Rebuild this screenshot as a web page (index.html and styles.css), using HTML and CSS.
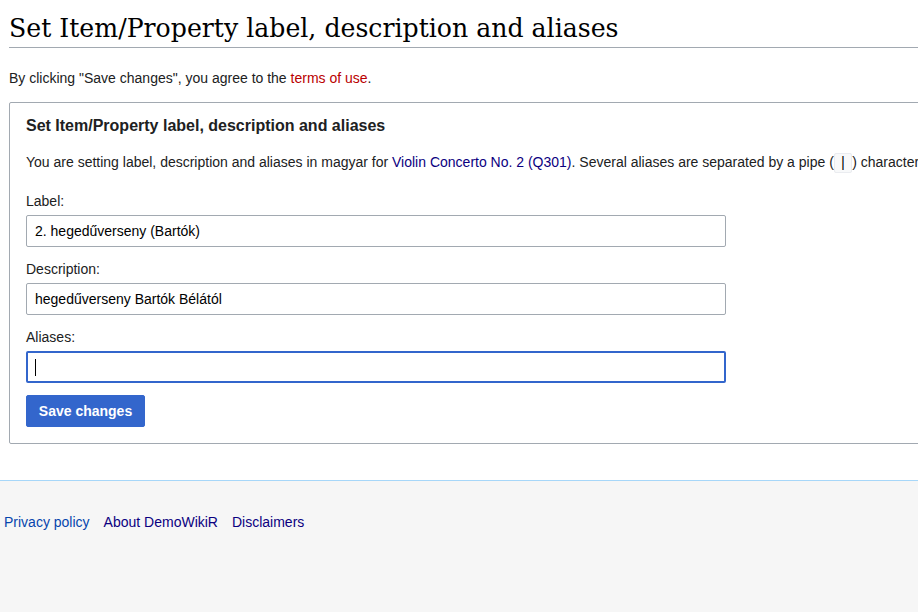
FILE: index.html
```html
<!DOCTYPE html>
<html lang="en">
<head>
<meta charset="utf-8">
<title>Set Item/Property label, description and aliases</title>
<link rel="stylesheet" href="styles.css">
</head>
<body>
<div class="page">
  <main class="content">
    <h1 class="title">Set Item/Property label, description and aliases</h1>
    <p class="notice">By clicking "Save changes", you agree to the <a class="link-red" href="#">terms of use</a>.</p>
    <form class="box">
      <h2 class="box-title">Set Item/Property label, description and aliases</h2>
      <p class="intro">You are setting label, description and aliases in magyar for <a class="link-visited" href="#">Violin Concerto No. 2 (Q301)</a>. Several aliases are separated by a pipe (<code class="pipe">|</code>) character.</p>
      <div class="field">
        <label class="field-label">Label:</label>
        <div class="input">2. hegedűverseny (Bartók)</div>
      </div>
      <div class="field">
        <label class="field-label">Description:</label>
        <div class="input">hegedűverseny Bartók Bélától</div>
      </div>
      <div class="field">
        <label class="field-label">Aliases:</label>
        <div class="input focused"><span class="caret"></span></div>
      </div>
      <button class="btn" type="button">Save changes</button>
    </form>
  </main>
  <footer class="footer">
    <a class="flink" href="#">Privacy policy</a>
    <a class="flink visited" href="#">About DemoWikiR</a>
    <a class="flink visited" href="#">Disclaimers</a>
  </footer>
</div>
</body>
</html>
```

FILE: styles.css
```css
html, body {
  margin: 0;
  padding: 0;
  overflow: hidden;
  height: 100%;
}
body {
  font-family: "Liberation Sans", Arial, sans-serif;
  font-size: 14px;
  color: #202122;
  background: #f6f6f6;
}
.page {
  width: 1200px;
  min-height: 100%;
  display: flex;
  flex-direction: column;
}
.content {
  background: #fff;
  padding: 10px 0 36px 9px;
}
.title {
  font-family: "DejaVu Serif", "Liberation Serif", serif;
  font-weight: normal;
  font-size: 25.2px;
  line-height: 37px;
  color: #000;
  margin: 0;
  padding-bottom: 0;
  border-bottom: 1px solid #a2a9b1;
}
.notice {
  margin: 19px 0 13px;
  line-height: 22px;
}
.link-red { color: #ba0000; text-decoration: none; }
.link-visited { color: #0b0080; text-decoration: none; }
.box {
  border: 1px solid #a2a9b1;
  border-radius: 2px;
  padding: 12px 16px 16px;
  width: 1100px;
}
.box-title {
  font-size: 16px;
  font-weight: bold;
  margin: 0 0 14px;
  line-height: 22px;
  color: #202122;
}
.intro {
  margin: 0 0 16px;
  line-height: 22px;
  white-space: nowrap;
}
.pipe {
  font-family: "Liberation Mono", monospace;
  font-size: 14px;
  background: #f8f9fa;
  border: 1px solid #eaecf0;
  border-radius: 2px;
  padding: 1px 4px;
  color: #000;
}
.field { display: flex; flex-direction: column; }
.field-label {
  line-height: 22px;
  margin-bottom: 3px;
}
.input {
  box-sizing: border-box;
  width: 700px;
  height: 32px;
  border: 1px solid #a2a9b1;
  border-radius: 2px;
  padding: 0 8px;
  line-height: 30px;
  color: #000;
  margin-bottom: 11px;
}
.input.focused {
  border: 2px solid #36c;
  padding: 0 7px;
  display: flex;
  align-items: center;
  margin-bottom: 12px;
}
.caret {
  width: 1px;
  height: 17px;
  background: #000;
}
.btn {
  align-self: flex-start;
  font-family: "Liberation Sans", Arial, sans-serif;
  font-size: 14px;
  font-weight: bold;
  color: #fff;
  background: #36c;
  border: 1px solid #36c;
  border-radius: 2px;
  width: 119px;
  height: 32px;
  padding: 0;
}
.footer {
  flex: 1;
  background: #f6f6f6;
  border-top: 1px solid #a7d7f9;
  padding: 31px 0 0 4px;
  display: flex;
  gap: 14px;
  align-items: flex-start;
}
.flink {
  color: #0645ad;
  text-decoration: none;
  line-height: 20px;
}
.flink.visited { color: #0b0080; }
```
